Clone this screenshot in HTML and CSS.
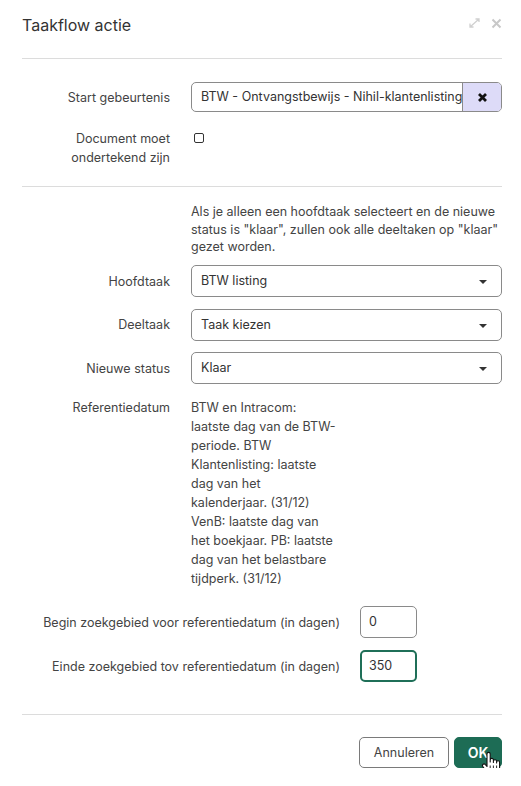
FILE: index.html
```html
<!DOCTYPE html>
<html lang="nl">

<head>
    <meta charset="UTF-8">
    <meta name="viewport" content="width=device-width, initial-scale=1.0">
    <title>Taakflow actie</title>
    <link rel="stylesheet" href="styles.css">
</head>

<body>
    <div class="dialog">
        <header class="dialog-header">
            <h1>Taakflow actie</h1>
            <div class="header-tools">
                <svg class="tool" width="15" height="12" viewBox="0 0 15 12">
                    <path d="M3 10 L12 2 M8.5 2 H12 V5 M3 6.5 V10 H6.5" fill="none" stroke="#d0d0d0" stroke-width="1.3" />
                </svg>
                <svg class="tool" width="11" height="11" viewBox="0 0 11 11">
                    <path d="M1.5 1.5 L9.5 9.5 M9.5 1.5 L1.5 9.5" stroke="#c8c8c8" stroke-width="2" />
                </svg>
            </div>
        </header>

        <!-- gebeurtenis -->
        <section class="section first">
            <div class="row center">
                <label class="label">Start gebeurtenis</label>
                <div class="input-group">
                    <div class="input-text">BTW - Ontvangstbewijs - Nihil-klantenlisting</div>
                    <button class="clear-btn">
                        <svg width="11" height="11" viewBox="0 0 11 11">
                            <path d="M2 2 L9 9 M9 2 L2 9" stroke="#111" stroke-width="2.8" />
                        </svg>
                    </button>
                </div>
            </div>
            <div class="row sign-row">
                <label class="label">Document moet ondertekend zijn</label>
                <div><input type="checkbox" class="check"></div>
            </div>
        </section>

        <!-- taak + status -->
        <section class="section">
            <p class="hint">Als je alleen een hoofdtaak selecteert en de nieuwe status is "klaar", zullen ook alle deeltaken op "klaar" gezet worden.</p>

            <div class="selects">
                <div class="row center">
                    <label class="label">Hoofdtaak</label>
                    <div class="select">BTW listing<span class="caret"></span></div>
                </div>
                <div class="row center">
                    <label class="label">Deeltaak</label>
                    <div class="select">Taak kiezen<span class="caret"></span></div>
                </div>
                <div class="row center">
                    <label class="label">Nieuwe status</label>
                    <div class="select">Klaar<span class="caret"></span></div>
                </div>
            </div>

            <div class="row ref-row">
                <label class="label">Referentiedatum</label>
                <p class="ref-text">BTW en Intracom: laatste dag van de BTW-periode. BTW Klantenlisting: laatste dag van het kalenderjaar. (31/12) VenB: laatste dag van het boekjaar. PB: laatste dag van het belastbare tijdperk. (31/12)</p>
            </div>

            <div class="range">
                <div class="range-row">
                    <label class="label">Begin zoekgebied voor referentiedatum (in dagen)</label>
                    <div class="num">0</div>
                </div>
                <div class="range-row">
                    <label class="label">Einde zoekgebied tov referentiedatum (in dagen)</label>
                    <div class="num active">350</div>
                </div>
            </div>
        </section>

        <footer class="dialog-footer">
            <button class="btn btn-cancel">Annuleren</button>
            <button class="btn btn-ok">OK</button>
            <svg class="cursor" width="20" height="26" viewBox="0 0 20 26">
                <path d="M6 13 V3 a1.6 1.6 0 0 1 3.2 0 V11 V9 a1.6 1.6 0 0 1 3.2 0 V11.5 V10.3 a1.6 1.6 0 0 1 3.2 0 V12 V11.3 a1.5 1.5 0 0 1 3 0 V18 c0 3.5 -2.2 6 -5.5 6 H10 c-2 0 -3.2 -1 -4.2 -2.6 L1.8 15.5 a1.6 1.6 0 0 1 2.6 -1.9 L6 15.5 Z" fill="#fff" stroke="#111" stroke-width="1.1" stroke-linejoin="round" />
                <path d="M9.2 14.5 V19 M12.4 14.5 V19 M15.6 14.5 V19" stroke="#111" stroke-width="0.9" />
            </svg>
        </footer>
    </div>
</body>

</html>
```

FILE: styles.css
```css
* {
    box-sizing: border-box;
}

body {
    margin: 0;
    background: #fff;
    color: #444;
    font-family: Inter, "Noto Sans", sans-serif;
    font-size: 12.5px;
}

.dialog {
    padding: 0 19px 0 22px;
}

.dialog-header {
    height: 59px;
    display: flex;
    justify-content: space-between;
    align-items: flex-start;
    padding-top: 14px;
    border-bottom: 1px solid #dcdcdc;
}

.dialog-header h1 {
    margin: 0;
    font-size: 16px;
    font-weight: 400;
    line-height: 22px;
    color: #333;
}

.header-tools {
    display: flex;
    align-items: center;
    gap: 9px;
    padding-top: 3px;
}

.section {
    padding: 16px 0 32px;
    border-bottom: 1px solid #dcdcdc;
}

.section.first {
    padding: 23px 0 19px;
}

.row {
    display: grid;
    grid-template-columns: 148px 1fr;
    column-gap: 21px;
    align-items: start;
}

.row.center {
    align-items: center;
}

.label {
    text-align: right;
    line-height: 19px;
    color: #444;
}

.input-group {
    display: flex;
    height: 30px;
    border: 1px solid #8a8a8a;
    border-radius: 5px;
    overflow: hidden;
}

.input-text {
    flex: 1;
    min-width: 0;
    padding: 0 9px;
    line-height: 28px;
    white-space: nowrap;
    overflow: hidden;
    color: #333;
}

.clear-btn {
    width: 39px;
    border: none;
    border-left: 1px solid #8a8a8a;
    background: #dddbf8;
    display: flex;
    align-items: center;
    justify-content: center;
    padding: 0;
}

.sign-row {
    margin-top: 17px;
}

.check {
    appearance: none;
    width: 10px;
    height: 10px;
    margin: 4px 0 0 3px;
    border: 1px solid #333;
    border-radius: 2px;
    background: #fff;
}

.hint {
    margin: 0 0 0 169px;
    line-height: 17.5px;
    color: #444;
}

.selects {
    display: grid;
    row-gap: 11.5px;
    margin-top: 9.5px;
}

.select {
    position: relative;
    height: 32px;
    border: 1px solid #8a8a8a;
    border-radius: 5px;
    padding: 0 9px;
    line-height: 30px;
    color: #333;
}

.caret {
    position: absolute;
    right: 14px;
    top: 14px;
    border-left: 4px solid transparent;
    border-right: 4px solid transparent;
    border-top: 4px solid #333;
}

.ref-row {
    margin-top: 14px;
}

.ref-text {
    margin: 0;
    width: 145px;
    line-height: 19px;
    color: #444;
}

.range {
    display: grid;
    row-gap: 12px;
    margin-top: 18px;
}

.range-row {
    display: grid;
    grid-template-columns: 318px 57px;
    column-gap: 20px;
    align-items: center;
}

.num {
    height: 32px;
    border: 1px solid #8a8a8a;
    border-radius: 5px;
    padding: 0 8px;
    line-height: 30px;
    color: #333;
}

.num.active {
    border: 2px solid #1f6f58;
    padding: 0 7px;
    line-height: 28px;
}

.dialog-footer {
    position: relative;
    display: flex;
    justify-content: flex-end;
    gap: 5px;
    padding-top: 22px;
}

.btn {
    height: 31px;
    border-radius: 5px;
    font-family: inherit;
    font-size: 12.5px;
}

.btn-cancel {
    width: 90px;
    background: #fff;
    border: 1px solid #7a7a7a;
    color: #444;
}

.btn-ok {
    width: 48px;
    background: #1d6c55;
    border: 1px solid #1d6c55;
    color: #fff;
    font-weight: 600;
    font-size: 14px;
}

.cursor {
    position: absolute;
    left: 459px;
    top: 36px;
}
```
